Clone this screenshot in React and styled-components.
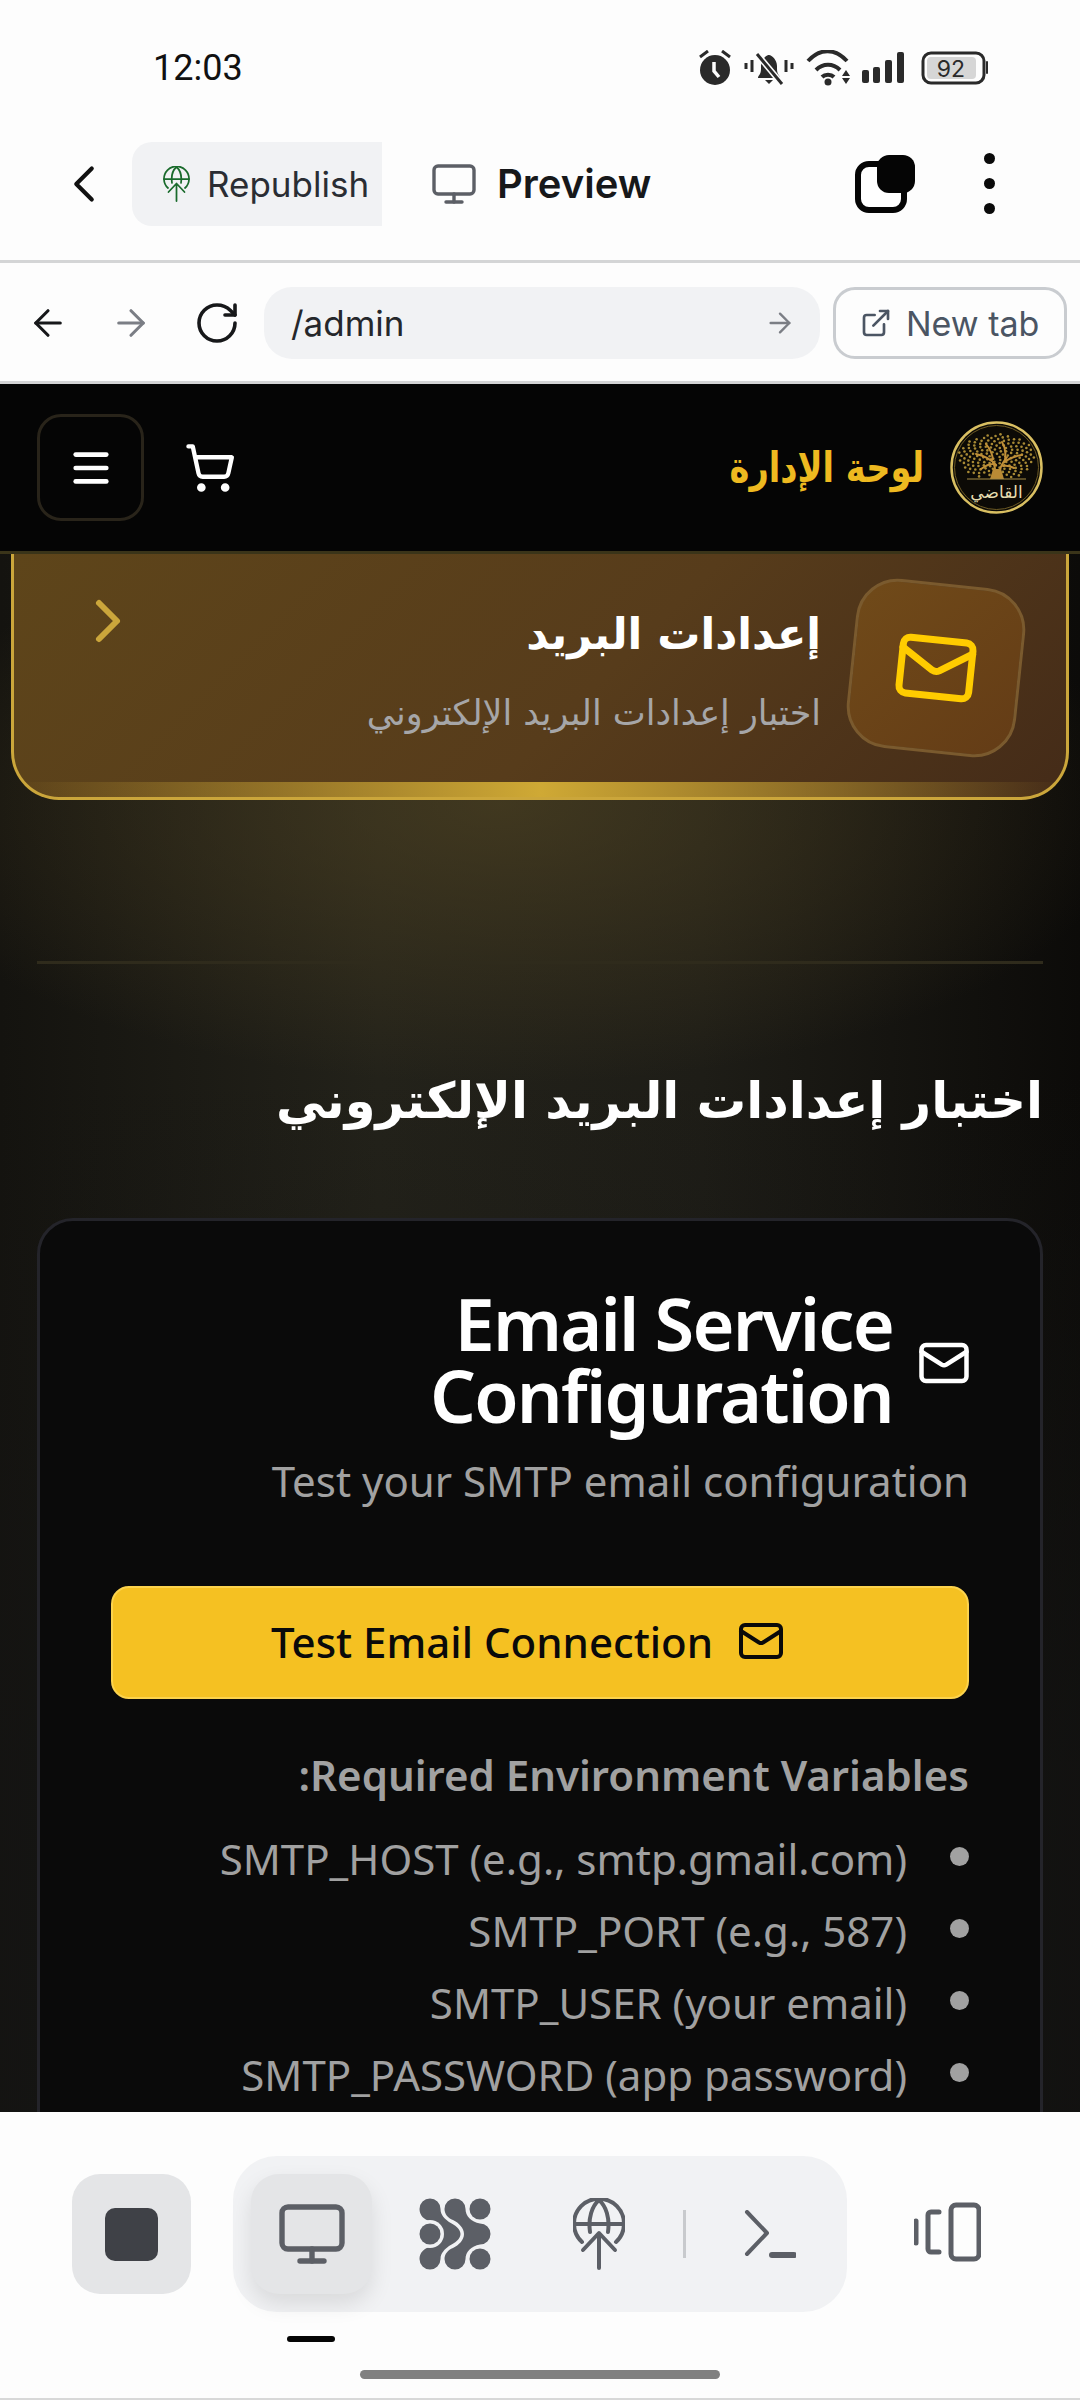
import React from "react";
import styled, { createGlobalStyle } from "styled-components";
import {
  ArrowLeft,
  ArrowRight,
  RotateCw,
  ExternalLink,
  Monitor,
  ShoppingCart,
  Mail,
  Menu,
  ChevronLeft,
  ChevronRight,
} from "lucide-react";

const GlobalStyle = createGlobalStyle`
  html, body { margin: 0; padding: 0; background: #fdfdfd; }
  * { box-sizing: border-box; }
`;

const Page = styled.div`
  width: 1080px;
  height: 2400px;
  display: flex;
  flex-direction: column;
  overflow: hidden;
  background: #fdfdfd;
  font-family: "Inter", "Noto Sans", sans-serif;
`;

const StatusBar = styled.div`
  height: 135px;
  display: flex;
  align-items: center;
  justify-content: space-between;
  padding: 1px 92px 0 153px;
`;

const Time = styled.span`
  font-family: "Roboto", sans-serif;
  font-size: 36px;
  color: #111;
`;

const StatusIcons = styled.svg`
  display: block;
`;

const AppBar = styled.div`
  height: 128px;
  display: flex;
  align-items: center;
  padding: 0 0 28px 53px;
  border-bottom: 3px solid #d4d5d6;
`;

const Chip = styled.div`
  width: 250px;
  height: 84px;
  margin-left: 17px;
  display: flex;
  align-items: center;
  gap: 16px;
  padding-left: 30px;
  background: #f1f2f4;
  border-radius: 20px 0 0 20px;
  font-size: 35px;
  color: #2a2d33;
  white-space: nowrap;
`;

const PreviewTab = styled.div`
  display: flex;
  align-items: center;
  gap: 19px;
  margin-left: 48px;
  font-size: 40px;
  font-weight: 600;
  color: #17181a;
`;

const AppActions = styled.div`
  margin-left: auto;
  display: flex;
  align-items: center;
  gap: 69px;
  padding-right: 85px;
`;

const TabsIcon = styled.div`
  position: relative;
  width: 60px;
  height: 58px;
`;

const TabsBack = styled.span`
  position: absolute;
  left: 0;
  bottom: 0;
  width: 52px;
  height: 52px;
  border: 6px solid #050505;
  border-radius: 14px;
  background: #fff;
`;

const TabsFront = styled.span`
  position: absolute;
  right: 0;
  top: 0;
  width: 38px;
  height: 38px;
  background: #050505;
  border-radius: 12px;
`;

const Kebab = styled.div`
  display: flex;
  flex-direction: column;
  gap: 14px;
`;

const Dot = styled.span`
  width: 11px;
  height: 11px;
  border-radius: 50%;
  background: #0a0a0a;
`;

const BrowserBar = styled.div`
  height: 121px;
  display: flex;
  align-items: center;
  padding: 2px 0 0 27px;
  border-bottom: 3px solid #d4d5d6;
`;

const NavIcons = styled.div`
  display: flex;
  align-items: center;
  gap: 41px;
`;

const UrlBox = styled.div`
  width: 556px;
  height: 72px;
  margin-left: 23px;
  display: flex;
  align-items: center;
  justify-content: space-between;
  padding: 0 24px 0 27px;
  background: #f1f2f4;
  border-radius: 28px;
  font-size: 35px;
  color: #25272b;
`;

const NewTab = styled.div`
  width: 234px;
  height: 72px;
  margin-left: 13px;
  display: flex;
  align-items: center;
  gap: 14px;
  padding-left: 24px;
  border: 3px solid #c9ccd0;
  border-radius: 22px;
  font-size: 34px;
  color: #4b5563;
  white-space: nowrap;
`;

const Screen = styled.div`
  flex: 1;
  min-height: 0;
  display: flex;
  flex-direction: column;
  overflow: hidden;
  background: radial-gradient(ellipse 640px 280px at 500px 420px, rgba(78, 66, 34, 0.7) 0%, rgba(78, 66, 34, 0) 100%),
    linear-gradient(180deg, rgba(24, 24, 22, 0) 40%, rgba(20, 20, 19, 0.75) 80%),
    linear-gradient(90deg, #14130f 0%, #23221a 35%, #1e1d17 65%, #0c0b09 100%);
`;

const Header = styled.header`
  flex: none;
  height: 170px;
  display: flex;
  align-items: center;
  justify-content: space-between;
  padding: 0 37px;
  background: #050505;
  border-bottom: 3px solid #3a3419;
`;

const HeaderLeft = styled.div`
  display: flex;
  align-items: center;
  gap: 40px;
`;

const MenuButton = styled.div`
  width: 107px;
  height: 107px;
  display: flex;
  align-items: center;
  justify-content: center;
  border: 3px solid #29241a;
  border-radius: 24px;
  color: #fff;
`;

const Brand = styled.div`
  display: flex;
  align-items: center;
  gap: 26px;
`;

const BrandTitle = styled.span`
  font-family: "DejaVu Sans", sans-serif;
  font-size: 42px;
  font-weight: 700;
  color: #eeb920;
  transform: scaleX(0.8);
  transform-origin: right center;
`;

const LinkCard = styled.div`
  flex: none;
  position: relative;
  height: 246px;
  margin: 0 11px;
  display: flex;
  align-items: flex-start;
  direction: rtl;
  padding: 20px 45px 0 0;
  gap: 30px;
  overflow: hidden;
  border: 3px solid #cba63b;
  border-top: 0;
  border-radius: 0 0 48px 48px;
  background: linear-gradient(135deg, #5e451a 0%, #573c1b 55%, #442b18 100%);
`;

const TiltIcon = styled.div`
  flex: none;
  width: 170px;
  height: 170px;
  margin-top: 9px;
  display: flex;
  align-items: center;
  justify-content: center;
  transform: rotate(6deg);
  border: 3px solid #7a5a2e;
  border-radius: 42px;
  background: linear-gradient(135deg, #704a19 0%, #643c16 100%);
  color: #ffcc00;
`;

const LinkText = styled.div`
  flex: 1;
  display: flex;
  flex-direction: column;
  gap: 26px;
  padding-top: 30px;
`;

const LinkTitle = styled.div`
  font-family: "DejaVu Sans", sans-serif;
  font-size: 43px;
  font-weight: 700;
  line-height: 60px;
  color: #fff;
`;

const LinkSub = styled.div`
  font-family: "DejaVu Sans", sans-serif;
  font-size: 35px;
  line-height: 46px;
  color: #a6a6a8;
`;

const LinkChevron = styled.div`
  flex: none;
  margin: 11px 0 0 58px;
  color: #cba63b;
`;

const GoldBar = styled.span`
  position: absolute;
  left: 0;
  right: 0;
  bottom: 0;
  height: 15px;
  background: linear-gradient(90deg, rgba(212, 175, 55, 0) 0%, #cfa935 50%, rgba(212, 175, 55, 0) 100%);
`;

const Divider = styled.div`
  flex: none;
  height: 3px;
  margin: 161px 37px 0;
  background: #2f2b1c;
`;

const PageTitle = styled.h1`
  flex: none;
  margin: 104px 37px 0;
  direction: rtl;
  font-family: "DejaVu Sans", sans-serif;
  font-size: 49.6px;
  font-weight: 700;
  line-height: 66px;
  color: #fff;
  white-space: nowrap;
`;

const ConfigCard = styled.section`
  flex: none;
  margin: 84px 37px 0;
  padding: 66px 71px 0;
  min-height: 1000px;
  direction: rtl;
  background: #0a0a0a;
  border: 3px solid #24242a;
  border-radius: 36px;
`;

const CardTitleRow = styled.div`
  display: flex;
  align-items: center;
  gap: 24px;
`;

const TitleMail = styled(Mail)`
  flex: none;
  margin: 8px -2px 0 0;
`;

const CardTitle = styled.h2`
  margin: 0;
  width: 480px;
  direction: ltr;
  text-align: right;
  font-family: "Noto Sans", sans-serif;
  font-size: 72px;
  font-weight: 600;
  line-height: 72px;
  letter-spacing: -1.8px;
  color: #fff;
`;

const CardDesc = styled.p`
  margin: 20px 0 0;
  direction: ltr;
  text-align: right;
  font-family: "Noto Sans", sans-serif;
  font-size: 42px;
  line-height: 60px;
  color: #a1a1a1;
`;

const TestButton = styled.button`
  width: 858px;
  height: 113px;
  margin-top: 75px;
  display: flex;
  align-items: center;
  justify-content: center;
  gap: 24px;
  padding: 0 24px 3px 0;
  direction: ltr;
  background: #f5c122;
  border: 2px solid #fcd34d;
  border-radius: 18px;
  font-family: "Noto Sans", sans-serif;
  font-size: 42px;
  font-weight: 500;
  color: #0a0a0a;
`;

const VarsTitle = styled.div`
  margin-top: 46px;
  direction: ltr;
  text-align: right;
  font-family: "Noto Sans", sans-serif;
  font-size: 42px;
  font-weight: 600;
  line-height: 60px;
  color: #a1a1a1;
`;

const VarList = styled.ul`
  margin: 24px 0 0;
  padding: 0;
  list-style: none;
  display: flex;
  flex-direction: column;
  gap: 12px;
`;

const VarRow = styled.li`
  display: flex;
  align-items: center;
  gap: 43px;
  height: 60px;
  padding-bottom: 2px;
  font-family: "Noto Sans", sans-serif;
  font-size: 42px;
  color: #a1a1a1;
`;

const Bullet = styled.span`
  flex: none;
  width: 19px;
  height: 19px;
  margin-top: -4px;
  border-radius: 50%;
  background: #a1a1a1;
`;

const VarText = styled.span`
  direction: ltr;
`;

const BottomBar = styled.div`
  flex: none;
  position: relative;
  height: 288px;
  display: flex;
  align-items: flex-start;
  padding: 44px 0 0 72px;
  background: #fdfdfd;
  border-bottom: 2px solid #d8d8d8;
`;

const StopButton = styled.div`
  width: 119px;
  height: 120px;
  margin-top: 18px;
  display: flex;
  align-items: center;
  justify-content: center;
  background: #e4e5e7;
  border-radius: 28px;
`;

const StopSquare = styled.span`
  width: 53px;
  height: 53px;
  background: #3f4147;
  border-radius: 10px;
`;

const ToolPill = styled.div`
  width: 614px;
  height: 156px;
  margin-left: 42px;
  display: flex;
  align-items: center;
  padding-left: 18px;
  background: #f1f2f4;
  border-radius: 44px;
`;

const ActiveTool = styled.div`
  width: 121px;
  height: 120px;
  display: flex;
  align-items: center;
  justify-content: center;
  background: #e4e5e7;
  border-radius: 28px;
  box-shadow: 0 10px 22px rgba(0, 0, 0, 0.1);
  color: #5c5f66;
`;

const ToolSlot = styled.div`
  flex: none;
  margin-left: ${(p) => p.$gap}px;
  display: flex;
  align-items: center;
`;

const ToolDivider = styled.span`
  flex: none;
  width: 3px;
  height: 48px;
  margin-left: 58px;
  background: #c8cacd;
`;

const SplitSlot = styled.div`
  margin: 46px 0 0 67px;
`;

const Underline = styled.span`
  position: absolute;
  left: 287px;
  top: 224px;
  width: 48px;
  height: 6px;
  border-radius: 3px;
  background: #050505;
`;

const HomeIndicator = styled.span`
  position: absolute;
  left: 360px;
  top: 258px;
  width: 360px;
  height: 9px;
  border-radius: 5px;
  background: #808080;
`;

const StatusGlyphs = () => (
  <StatusIcons width="289" height="36" viewBox="0 0 289 36" fill="#2a2a2a">
    <circle cx="16" cy="20" r="15" />
    <path d="M1 7l8-6M31 7l-8-6" stroke="#2a2a2a" strokeWidth="3" />
    <path d="M15 12v9l5 6" stroke="#fdfdfd" strokeWidth="3.5" fill="none" />
    <path d="M59 28c0-3 3-3 3-9v-3c0-6 5-11 8-11s8 5 8 11v3c0 6 3 6 3 9z" />
    <path d="M66 30h8l-4 4z" />
    <path d="M58 4l25 30" stroke="#fdfdfd" strokeWidth="6" />
    <path d="M58 4l25 30" stroke="#2a2a2a" strokeWidth="3" />
    <path d="M47 13v6M53 10v12M87 10v12M93 13v6" stroke="#2a2a2a" strokeWidth="3" />
    <path d="M109 11c12-13 27-13 39 0M117 20c7-7 17-7 24 0M123 27c3-3 9-3 12 0" stroke="#2a2a2a" strokeWidth="4" fill="none" />
    <circle cx="129" cy="32" r="3.5" />
    <path d="M143 26l4-6 4 6zM143 28h8l-4 6z" />
    <rect x="163" y="20" width="7" height="13" rx="2" />
    <rect x="174" y="17" width="7" height="16" rx="2" />
    <rect x="186" y="10" width="7" height="23" rx="2" />
    <rect x="198" y="2" width="7" height="31" rx="2" />
    <rect x="224" y="3" width="61" height="30" rx="8" fill="none" stroke="#2a2a2a" strokeWidth="3" />
    <rect x="228" y="7" width="49" height="22" rx="4" fill="#d6d6d6" />
    <text x="252" y="27" fontFamily="Inter, sans-serif" fontSize="23" textAnchor="middle">92</text>
    <rect x="287" y="11" width="2" height="13" rx="1" />
  </StatusIcons>
);

const GlobeUp = ({ color, width, height, stroke }) => (
  <svg width={width} height={height} viewBox="0 0 52 72" fill="none" stroke={color} strokeWidth={stroke} strokeLinecap="round">
    <path d="M9 44A25 25 0 1 1 43 44" />
    <path d="M1 26H51" />
    <path d="M17 34C15 20 19 8 26 2c7 6 11 18 9 32" />
    <path d="M26 70V36M10 52l16-17 16 17" strokeLinejoin="round" />
  </svg>
);

const BlobsIcon = () => (
  <svg width="72" height="72" viewBox="0 0 72 72" fill="#5c5f66">
    <path d="M36 .5A10.5 10.5 0 0 1 46.5 11C46.5 18 52 24 61 25.5A10.5 10.5 0 0 1 61 46.5C52 48 46.5 54 46.5 61A10.5 10.5 0 0 1 25.5 61C25.5 56 29 52 34 50C40 47 45 42 45 36C45 30 40 25 34 22C29 20 25.5 16 25.5 11A10.5 10.5 0 0 1 36 .5Z" />
    <path d="M11 .5A10.5 10.5 0 0 1 21.5 11C21.5 17 26 21 30 24C36 27 41.5 31 41.5 36C41.5 41 36 45 30 48C26 51 21.5 55 21.5 61A10.5 10.5 0 0 1 .5 61C.5 55 5 50 11 49L24 36L11 23C5 22 .5 17 .5 11A10.5 10.5 0 0 1 11 .5Z" />
    <circle cx="11" cy="36" r="14" fill="#f1f2f4" />
    <circle cx="11" cy="36" r="10.5" />
    <circle cx="61" cy="11" r="10.5" />
    <circle cx="61" cy="61" r="10.5" />
  </svg>
);

const TerminalGlyph = () => (
  <svg width="52" height="48" viewBox="0 0 52 48" fill="none" stroke="#5c5f66" strokeLinecap="round">
    <path d="M3 2l20 21L3 44" strokeWidth="4" strokeLinejoin="round" />
    <path d="M28 45h22" strokeWidth="6" />
  </svg>
);

const SplitGlyph = () => (
  <svg width="67" height="60" viewBox="0 0 67 60" fill="none" stroke="#5c5f66" strokeWidth="5" strokeLinecap="round">
    <rect x="37" y="3" width="28" height="54" rx="5" />
    <path d="M25 10h-8a3 3 0 0 0-3 3v34a3 3 0 0 0 3 3h8" />
    <path d="M2 19v22" />
  </svg>
);

// leaf speckles for the logo, spread over the crown of the tree
const LEAVES = Array.from({ length: 150 }, (_, i) => {
  const a = i * 2.39996;
  const r = Math.sqrt((i + 1) / 150);
  return { x: 46.5 + Math.cos(a) * r * 38, y: 36 + Math.sin(a) * r * 23 };
}).filter((l) => l.y < 54 || Math.abs(l.x - 46.5) > 14);

const LogoMark = () => (
  <svg width="93" height="93" viewBox="0 0 93 93" fill="none">
    <circle cx="46.5" cy="46.5" r="45" fill="#0c0a06" stroke="#d9bf62" strokeWidth="2.5" />
    <circle cx="46.5" cy="46.5" r="42" stroke="#6d5a24" strokeWidth="1" />
    <g fill="#a88a35">
      {LEAVES.map((l, i) => (
        <circle key={i} cx={l.x} cy={l.y} r={1.3} />
      ))}
    </g>
    <path d="M44 56c2-8 1-12-3-18M50 56c-1-8 1-12 7-20M46 44c-5-6-11-9-20-11M53 42c5-4 11-7 19-8M43 38c-1-6-3-10-7-15M55 36c1-5 0-10-3-15M31 48c4-3 8-5 12-5M64 47c-4-2-7-3-11-2" stroke="#c08f38" strokeWidth="2" strokeLinecap="round" />
    <path d="M40 58h14l-3-10h-8z" fill="#b98a35" />
    <path d="M17 58h59" stroke="#a58b45" strokeWidth="1" />
    <text x="46.5" y="77" textAnchor="middle" fontFamily="DejaVu Sans, sans-serif" fontSize="17" fill="#e6dcae">القاضي</text>
  </svg>
);

const BackChevron = styled(ChevronLeft)`
  flex: none;
`;

const VARS = [
  "SMTP_HOST (e.g., smtp.gmail.com)",
  "SMTP_PORT (e.g., 587)",
  "SMTP_USER (your email)",
  "SMTP_PASSWORD (app password)",
];

const App = () => (
  <Page>
    <GlobalStyle />
    <StatusBar>
      <Time>12:03</Time>
      <StatusGlyphs />
    </StatusBar>
    <AppBar>
      <BackChevron size={62} color="#111" strokeWidth={1.6} />
      <Chip>
        <GlobeUp color="#1a6b2c" width={29} height={36} stroke={3.5} />
        Republish
      </Chip>
      <PreviewTab>
        <Monitor size={48} color="#5c5f66" strokeWidth={1.7} />
        Preview
      </PreviewTab>
      <AppActions>
        <TabsIcon>
          <TabsBack />
          <TabsFront />
        </TabsIcon>
        <Kebab>
          <Dot />
          <Dot />
          <Dot />
        </Kebab>
      </AppActions>
    </AppBar>
    <BrowserBar>
      <NavIcons>
        <ArrowLeft size={42} color="#17181a" strokeWidth={1.8} />
        <ArrowRight size={42} color="#7b7e85" strokeWidth={1.8} />
        <RotateCw size={48} color="#17181a" strokeWidth={1.8} />
      </NavIcons>
      <UrlBox>
        /admin
        <ArrowRight size={32} color="#7b7e85" strokeWidth={1.8} />
      </UrlBox>
      <NewTab>
        <ExternalLink size={32} color="#4b5563" strokeWidth={2} />
        New tab
      </NewTab>
    </BrowserBar>
    <Screen>
      <Header>
        <HeaderLeft>
          <MenuButton>
            <Menu size={46} strokeWidth={2.4} />
          </MenuButton>
          <ShoppingCart size={52} color="#fff" strokeWidth={2} />
        </HeaderLeft>
        <Brand>
          <BrandTitle dir="rtl">لوحة الإدارة</BrandTitle>
          <LogoMark />
        </Brand>
      </Header>
      <LinkCard>
        <TiltIcon>
          <Mail size={84} strokeWidth={2} />
        </TiltIcon>
        <LinkText>
          <LinkTitle>إعدادات البريد</LinkTitle>
          <LinkSub>اختبار إعدادات البريد الإلكتروني</LinkSub>
        </LinkText>
        <LinkChevron>
          <ChevronRight size={72} strokeWidth={2} />
        </LinkChevron>
        <GoldBar />
      </LinkCard>
      <Divider />
      <PageTitle>اختبار إعدادات البريد الإلكتروني</PageTitle>
      <ConfigCard>
        <CardTitleRow>
          <TitleMail size={54} color="#fff" strokeWidth={2} />
          <CardTitle>Email Service Configuration</CardTitle>
        </CardTitleRow>
        <CardDesc>Test your SMTP email configuration</CardDesc>
        <TestButton>
          Test Email Connection
          <Mail size={48} color="#0a0a0a" strokeWidth={2} />
        </TestButton>
        <VarsTitle>:Required Environment Variables</VarsTitle>
        <VarList>
          {VARS.map((v) => (
            <VarRow key={v}>
              <Bullet />
              <VarText>{v}</VarText>
            </VarRow>
          ))}
        </VarList>
      </ConfigCard>
    </Screen>
    <BottomBar>
      <StopButton>
        <StopSquare />
      </StopButton>
      <ToolPill>
        <ActiveTool>
          <Monitor size={72} strokeWidth={1.8} />
        </ActiveTool>
        <ToolSlot $gap={47}>
          <BlobsIcon />
        </ToolSlot>
        <ToolSlot $gap={82}>
          <GlobeUp color="#5c5f66" width={52} height={72} stroke={4} />
        </ToolSlot>
        <ToolDivider />
        <ToolSlot $gap={58}>
          <TerminalGlyph />
        </ToolSlot>
      </ToolPill>
      <SplitSlot>
        <SplitGlyph />
      </SplitSlot>
      <Underline />
      <HomeIndicator />
    </BottomBar>
  </Page>
);

export default App;
